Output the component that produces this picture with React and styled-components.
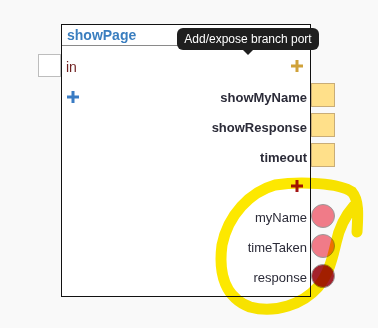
import React from "react";
import styled, { createGlobalStyle } from "styled-components";

const Global = createGlobalStyle`
  html, body { margin: 0; padding: 0; background: #f9f9f9; }
  body { font-family: "Liberation Sans", Arial, sans-serif; }
`;

const Canvas = styled.div`
  position: relative;
  width: 378px;
  height: 328px;
  padding: 24px 0 0 61px;
  box-sizing: border-box;
  overflow: hidden;
`;

const Node = styled.div`
  width: 250px;
  box-sizing: border-box;
  background: #fff;
  border: 1px solid #111;
  padding-bottom: 5px;
`;

const Header = styled.div`
  height: 20px;
  display: flex;
  align-items: center;
  padding-left: 5px;
  border-bottom: 1px solid #8a8a8a;
  margin-bottom: 5px;
  font-size: 14px;
  font-weight: bold;
  color: #3a7ebf;
`;

const Row = styled.div`
  height: 30px;
  display: flex;
  align-items: center;
  padding: 0 3px 0 4px;
`;

const Spacer = styled.div`
  flex: 1;
`;

const InPort = styled.div`
  width: 23px;
  height: 23px;
  box-sizing: border-box;
  margin-left: -28px;
  margin-right: 5px;
  margin-top: -1px;
  background: #fff;
  border: 1px solid #bdbdbd;
  flex-shrink: 0;
`;

const InLabel = styled.span`
  font-size: 14px;
  color: #6e1f1f;
  margin-top: 1px;
`;

const Label = styled.span`
  font-size: 13px;
  font-weight: ${(p) => (p.$bold ? "bold" : "normal")};
  color: #2b2b38;
  margin-top: 2px;
  white-space: nowrap;
`;

const Port = styled.div`
  width: 24px;
  height: 24px;
  box-sizing: border-box;
  flex-shrink: 0;
  margin-left: 4px;
  margin-right: -28px;
  background: ${(p) => p.$fill};
  border: ${(p) => (p.$round ? "1.5px solid #9a9a9a" : "1px solid #c9ad78")};
  border-radius: ${(p) => (p.$round ? "50%" : "0")};
  margin-top: ${(p) => (p.$round ? "-1px" : "-3px")};
`;

const PlusBox = styled.span`
  display: inline-flex;
  width: 12px;
  height: 12px;
  margin-left: ${(p) => p.$ml || 0}px;
  margin-right: ${(p) => p.$mr || 0}px;
  margin-top: ${(p) => p.$mt || 0}px;
`;

const Plus = ({ color, ...rest }) => (
  <PlusBox {...rest}>
    <svg width="12" height="12" viewBox="0 0 12 12">
      <rect x="4.5" y="0" width="3" height="12" fill={color} />
      <rect x="0" y="4.5" width="12" height="3" fill={color} />
    </svg>
  </PlusBox>
);

const Tooltip = styled.div`
  position: absolute;
  left: 177px;
  top: 28px;
  width: 142px;
  height: 22px;
  box-sizing: border-box;
  background: #1f1f1f;
  border-radius: 6px;
  color: #fff;
  font-size: 12px;
  display: flex;
  align-items: center;
  justify-content: center;
  white-space: nowrap;
  &::after {
    content: "";
    position: absolute;
    left: 66px;
    bottom: -5px;
    border-left: 5px solid transparent;
    border-right: 5px solid transparent;
    border-top: 5px solid #1f1f1f;
  }
`;

const Highlight = styled.svg`
  position: absolute;
  left: 0;
  top: 0;
  pointer-events: none;
  mix-blend-mode: multiply;
`;

const inputs = ["showMyName", "showResponse", "timeout"];
const outputs = [
  { name: "myName", fill: "#f07b88" },
  { name: "timeTaken", fill: "#f07b88" },
  { name: "response", fill: "#a3222c" },
];

export default function App() {
  return (
    <>
      <Global />
      <Canvas>
        <Node>
          <Header>showPage</Header>
          <Row>
            <InPort />
            <InLabel>in</InLabel>
            <Spacer />
            <Plus color="#d0a23a" $mr={4} />
          </Row>
          {inputs.map((n, i) => (
            <Row key={n}>
              {i === 0 && <Plus color="#3a7cc4" $ml={1} $mt={2} />}
              <Spacer />
              <Label $bold>{n}</Label>
              <Port $fill="#ffe08a" />
            </Row>
          ))}
          <Row>
            <Spacer />
            <Plus color="#a31414" $mr={4} />
          </Row>
          {outputs.map((o) => (
            <Row key={o.name}>
              <Spacer />
              <Label>{o.name}</Label>
              <Port $round $fill={o.fill} />
            </Row>
          ))}
        </Node>
        <Tooltip>Add/expose branch port</Tooltip>
        <Highlight width="378" height="328" viewBox="0 0 378 328">
          <path
            d="M 357 232 C 358 215, 359 200, 352 192 C 340 183, 300 181, 275 185 C 250 192, 228 215, 222 245 C 218 275, 226 298, 250 307 C 275 314, 303 304, 318 287 C 330 272, 333 255, 336 243 C 339 228, 346 215, 354 206"
            fill="none"
            stroke="#fde800"
            strokeWidth="11"
            strokeLinecap="round"
            strokeLinejoin="round"
          />
        </Highlight>
      </Canvas>
    </>
  );
}
